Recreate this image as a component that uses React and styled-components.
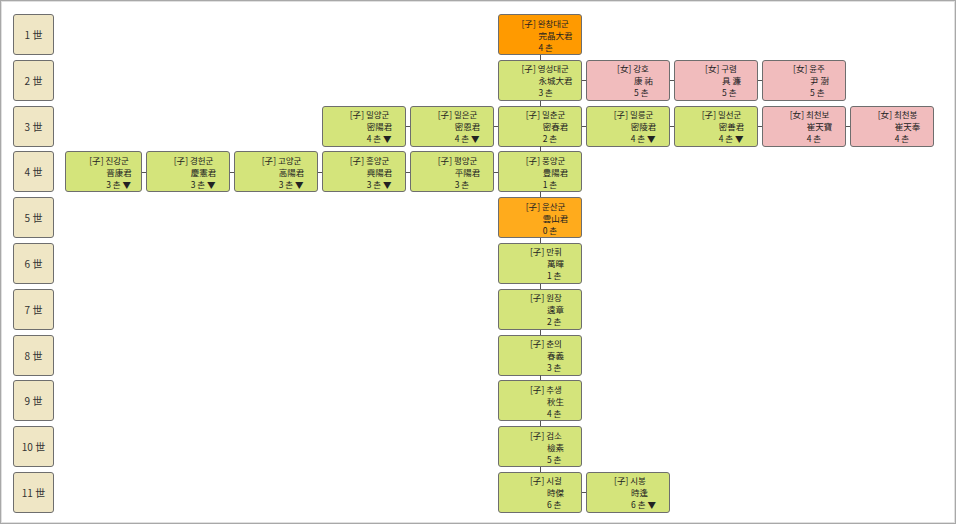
import React from "react";
import styled, { createGlobalStyle } from "styled-components";

const G = createGlobalStyle`
  html,body{margin:0;padding:0;background:#fff;}
  body{font-family:"Noto Sans CJK KR","Noto Sans CJK SC",sans-serif;}
`;
const Frame = styled.div`
  width:956px;height:524px;box-sizing:border-box;border:1px solid #a8a8a8;
  box-shadow:inset 0 0 0 1px #e0e0e0;padding:13px 0 0 12px;
`;
const Grid = styled.div`
  display:grid;grid-template-columns:41px repeat(10,84px);
  grid-auto-rows:41px;column-gap:4px;row-gap:4.8px;
`;
const Label = styled.div`
  grid-column:1;margin-right:0;background:#efe6c5;border:1px solid #6e6e6e;
  border-radius:3px;box-sizing:border-box;display:flex;align-items:center;justify-content:center;
  font-size:10px;color:#333;font-family:"Noto Sans CJK KR",sans-serif;
`;
const colors = { g: "#d4e47b", o: "#ff9a00", o2: "#ffab1c", p: "#f1bcbd" };
const Node = styled.div`
  position:relative;background:${p => colors[p.$c]};border:1px solid #6e6e6e;border-radius:3px;
  box-sizing:border-box;display:flex;justify-content:center;align-items:center;
  font-size:8.5px;line-height:12px;color:#222;
  ${p => p.$first ? "margin-left:7px;" : ""}
  &::before{content:"";display:${p => p.$up ? "block" : "none"};position:absolute;left:50%;top:-6px;height:5px;border-left:1px solid #555;}
  &::after{content:"";display:${p => p.$left ? "block" : "none"};position:absolute;top:50%;left:-5px;width:4px;border-top:1px solid #555;}
`;
const Txt = styled.div`display:inline-block;text-align:left;margin-left:14px;`;
const Line = styled.div`padding-left:${p => p.$ind ? "17px" : "0"};white-space:nowrap;`;

const rows = [
  [[5, "o", "子", "완창대군", "完晶大君", "4 촌"]],
  [[5, "g", "子", "영성대군", "永城大君", "3 촌"], [6, "p", "女", "강호", "康 祐", "5 촌"], [7, "p", "女", "구렴", "具 濂", "5 촌"], [8, "p", "女", "윤주", "尹 澍", "5 촌"]],
  [[3, "g", "子", "밀양군", "密陽君", "4 촌 ▼"], [4, "g", "子", "밀은군", "密恩君", "4 촌 ▼"], [5, "g", "子", "밀춘군", "密春君", "2 촌"], [6, "g", "子", "밀릉군", "密陵君", "4 촌 ▼"], [7, "g", "子", "밀선군", "密善君", "4 촌 ▼"], [8, "p", "女", "최천보", "崔天寶", "4 촌"], [9, "p", "女", "최천봉", "崔天奉", "4 촌"]],
  [[0, "g", "子", "진강군", "晋康君", "3 촌 ▼"], [1, "g", "子", "경헌군", "慶憲君", "3 촌 ▼"], [2, "g", "子", "고양군", "高陽君", "3 촌 ▼"], [3, "g", "子", "흥양군", "興陽君", "3 촌 ▼"], [4, "g", "子", "평양군", "平陽君", "3 촌"], [5, "g", "子", "풍양군", "豊陽君", "1 촌"]],
  [[5, "o2", "子", "운산군", "雲山君", "0 촌"]],
  [[5, "g", "子", "만휘", "萬暉", "1 촌"]],
  [[5, "g", "子", "원장", "遠章", "2 촌"]],
  [[5, "g", "子", "춘의", "春義", "3 촌"]],
  [[5, "g", "子", "추생", "秋生", "4 촌"]],
  [[5, "g", "子", "검소", "檢素", "5 촌"]],
  [[5, "g", "子", "시걸", "時傑", "6 촌"], [6, "g", "子", "시봉", "時逢", "6 촌 ▼"]],
];

export default function App() {
  return (
    <Frame>
      <G />
      <Grid>
        {rows.map((r, i) => (
          <React.Fragment key={i}>
            <Label style={{ gridRow: i + 1 }}>{i + 1} 世</Label>
            {r.map(([c, col, t, k, h, n], j) => (
              <Node key={j} $c={col} $first={c === 0} $up={c === 5 && i > 0} $left={j > 0}
                style={{ gridRow: i + 1, gridColumn: c + 2 }}>
                <Txt>
                  <Line>[{t}] {k}</Line>
                  <Line $ind>{h}</Line>
                  <Line $ind>{n}</Line>
                </Txt>
              </Node>
            ))}
          </React.Fragment>
        ))}
      </Grid>
    </Frame>
  );
}
